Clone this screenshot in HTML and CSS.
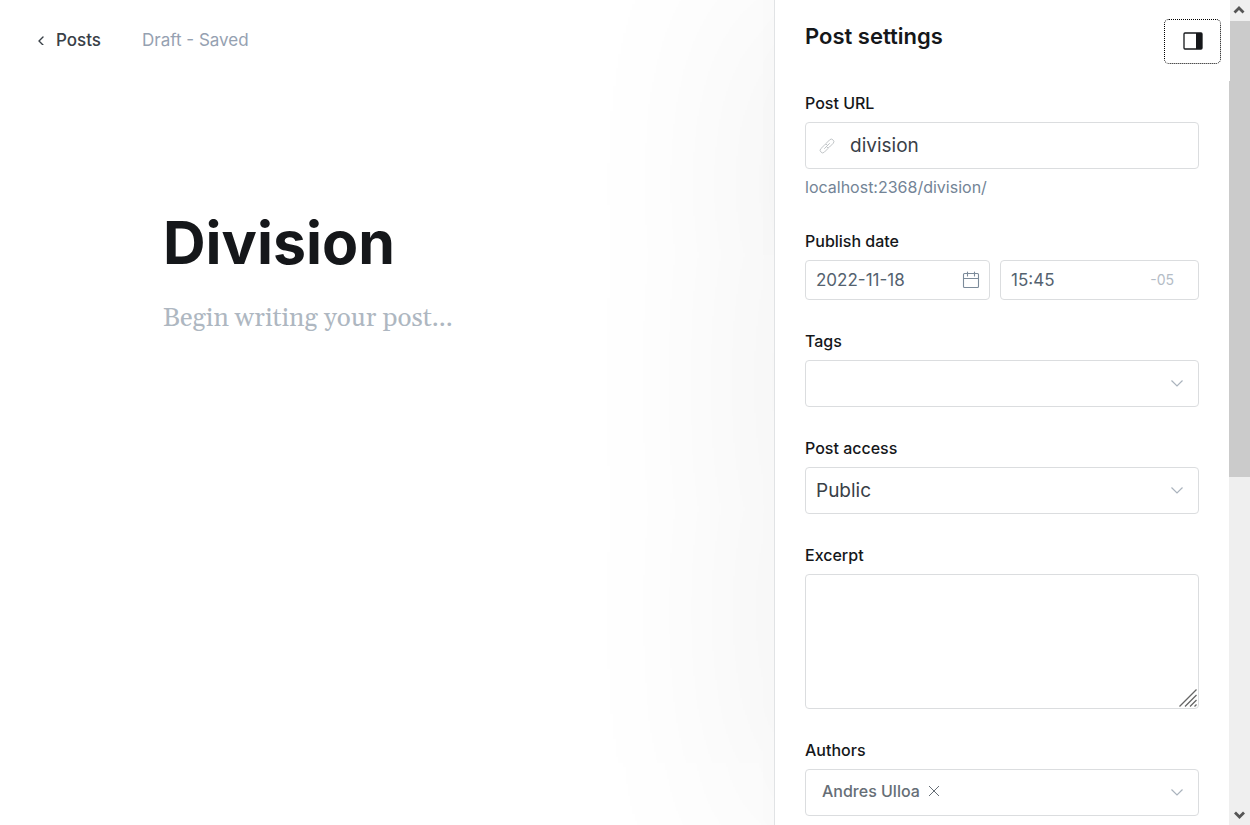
FILE: index.html
```html
<!DOCTYPE html>
<html lang="en">
<head>
<meta charset="utf-8">
<title>Division</title>
<meta name="viewport" content="width=device-width, initial-scale=1">
<link rel="stylesheet" href="styles.css">
</head>
<body>
<div class="app">
  <main class="editor">
    <header class="topbar">
      <a class="back" href="#posts">
        <svg width="8" height="10" viewBox="0 0 8 10" fill="none" stroke="currentColor" stroke-width="1.4" stroke-linecap="round" stroke-linejoin="round" aria-hidden="true"><path d="M6 2 2 6l4 4"/></svg>
        <span>Posts</span>
      </a>
      <span class="status">Draft - Saved</span>
    </header>
    <article class="canvas">
      <h1 class="post-title">Division</h1>
      <p class="post-placeholder">Begin writing your post...</p>
    </article>
  </main>

  <aside class="settings">
    <div class="panel">
      <header class="panel-head">
        <h2 class="panel-title">Post settings</h2>
        <button class="toggle" type="button" aria-label="Toggle settings">
          <svg width="20" height="19" viewBox="0 0 20 19" aria-hidden="true"><rect x="1" y="1" width="18" height="16" rx="1" fill="none" stroke="#15171a" stroke-width="1.3"/><path d="M13 1h6v16h-6z" fill="#15171a"/></svg>
        </button>
      </header>

      <form class="form">
        <div class="group">
          <label class="label" for="url">Post URL</label>
          <div class="field">
            <svg class="lead" width="16" height="16" viewBox="0 0 16 16" fill="none" stroke="#b9bdc1" stroke-width="0.9" stroke-linecap="round" stroke-linejoin="round" aria-hidden="true"><path d="m5.500 10.500 5-5"/><path d="M7 5.500 10.700 1.800a2.300 2.300 0 0 1 3.200 0l.3.3a2.300 2.300 0 0 1 0 3.200L10.500 9a2.300 2.300 0 0 1-2.200.6"/><path d="M9 10.500 5.300 14.200a2.300 2.300 0 0 1-3.200 0l-.3-.3a2.300 2.300 0 0 1 0-3.200L5.500 7a2.300 2.300 0 0 1 2.200-.6"/></svg>
            <input class="input input-lead" id="url" type="text" value="division">
          </div>
          <p class="help">localhost:2368/division/</p>
        </div>

        <div class="group">
          <label class="label" for="date">Publish date</label>
          <div class="datetime">
            <div class="field field-small">
              <input class="input" id="date" type="text" value="2022-11-18">
              <svg class="calendar" width="18" height="18" viewBox="0 0 18 18" fill="none" stroke="#7c8b9a" stroke-width="1.1" stroke-linecap="round" stroke-linejoin="round" aria-hidden="true"><rect x="1.500" y="2.500" width="15" height="14" rx="1"/><path d="M1.500 7.500h15M5.500 1v4M12.500 1v4"/></svg>
            </div>
            <div class="field field-small">
              <input class="input" id="time" type="text" value="15:45" aria-label="Publish time">
              <span class="zone">-05</span>
            </div>
          </div>
        </div>

        <div class="group">
          <label class="label" for="tags">Tags</label>
          <div class="field">
            <input class="input" id="tags" type="text" role="combobox" aria-expanded="false">
            <svg class="chevron" width="14" height="8" viewBox="0 0 14 8" aria-hidden="true"><path d="m1.500.500 5.500 5.500 5.500-5.500"/></svg>
          </div>
        </div>

        <div class="group">
          <label class="label" for="access">Post access</label>
          <div class="field">
            <select class="input input-select" id="access"><option>Public</option><option>Members only</option></select>
            <svg class="chevron" width="14" height="8" viewBox="0 0 14 8" aria-hidden="true"><path d="m1.500.500 5.500 5.500 5.500-5.500"/></svg>
          </div>
        </div>

        <div class="group">
          <label class="label" for="excerpt">Excerpt</label>
          <div class="field field-area">
            <textarea class="input area" id="excerpt"></textarea>
            <svg class="grip" width="18" height="18" viewBox="0 0 18 18" fill="none" stroke="#666" stroke-width="1.3" aria-hidden="true"><path d="M.5 17.500l17-17M6 17.500 17.500 6M11 17.500l6.500-6.500M15.500 17.500l2-2"/></svg>
          </div>
        </div>

        <div class="group">
          <label class="label" for="authors">Authors</label>
          <div class="field">
            <span class="token">Andres Ulloa
              <button class="remove" type="button" aria-label="Remove Andres Ulloa"><svg width="12" height="12" viewBox="0 0 12 12" stroke="#666e76" stroke-width="1" aria-hidden="true"><path d="m1 1 10 10M11 1 1 11"/></svg></button>
            </span>
            <input class="input" id="authors" type="text" role="combobox" aria-expanded="false">
            <svg class="chevron" width="14" height="8" viewBox="0 0 14 8" aria-hidden="true"><path d="m1.500.500 5.500 5.500 5.500-5.500"/></svg>
          </div>
        </div>
      </form>
    </div>

    <div class="scrollbar" aria-hidden="true">
      <svg class="arrow" width="21" height="21" viewBox="0 0 21 21"><path d="m5.500 12.500 4.500-4.500 4.500 4.500"/></svg>
      <div class="track"><div class="thumb"></div></div>
      <svg class="arrow" width="21" height="21" viewBox="0 0 21 21"><path d="m6 8.500 4.500 4.500 4.500-4.500"/></svg>
    </div>
  </aside>
</div>
</body>
</html>
```

FILE: styles.css
```css
*, *::before, *::after { box-sizing: border-box; }

body {
  margin: 0;
  background: #fff;
  color: #15171a;
  font-family: Inter, "Open Sans", sans-serif;
  font-size: 16px;
  line-height: 20px;
}

h1, h2, p { margin: 0; }

button, input, select, textarea { font: inherit; color: inherit; }

.app {
  display: flex;
  height: 100vh;
  overflow: hidden;
}

.editor { flex: 1; min-width: 0; }

.topbar {
  display: flex;
  align-items: center;
  gap: 41px;
  height: 80px;
  padding: 0 37px;
  font-size: 17px;
}

.back {
  display: flex;
  align-items: center;
  gap: 11px;
  color: #394047;
  font-weight: 500;
  text-decoration: none;
}

.status { color: #95a1b1; }

.canvas { padding: 123px 24px 0 163px; }

.post-title {
  font-size: 59px;
  font-weight: 700;
  line-height: 80px;
}

.post-placeholder {
  margin-top: 18px;
  color: #aeb7c1;
  font-family: Georgia, Gelasio, "Liberation Serif", serif;
  font-size: 26px;
  line-height: 36px;
}

.settings {
  display: flex;
  flex: 0 0 476px;
  border-left: 1px solid #e1e3e5;
  background: #fff;
  box-shadow: 0 0 200px 16px rgba(0, 0, 0, 0.065);
}

.panel { flex: 1; min-width: 0; }

.panel-head {
  position: relative;
  z-index: 1;
  display: flex;
  align-items: flex-start;
  justify-content: space-between;
  height: 81px;
  margin-right: -1px;
  padding: 19px 9px 0 30px;
  background: #fff;
}

.panel-title {
  padding-top: 3px;
  font-size: 22px;
  font-weight: 600;
  line-height: 28px;
}

.toggle {
  display: flex;
  align-items: center;
  justify-content: center;
  width: 57px;
  height: 45px;
  padding: 0;
  border: 1px dotted #000;
  border-radius: 5px;
  background: #fff;
}

.form {
  display: flex;
  flex-direction: column;
  gap: 31px;
  padding: 12px 30px 30px;
}

.label {
  display: block;
  margin-bottom: 9px;
  font-weight: 500;
}

.field {
  position: relative;
  display: flex;
  align-items: center;
  height: 47px;
  border: 1px solid #dbdddf;
  border-radius: 4px;
  background: #fff;
  color: #394047;
  font-size: 19px;
}

.input {
  flex: 1;
  width: 100%;
  min-width: 0;
  height: 100%;
  padding: 0 10px;
  border: 0;
  outline: 0;
  background: transparent;
}

.lead { flex: none; margin-left: 13px; }

.input-lead { padding-left: 15px; }

.input-select { appearance: none; }

.help {
  margin-top: 5px;
  color: #738496;
  line-height: 26px;
}

.datetime {
  display: grid;
  grid-template-columns: 185fr 199fr;
  gap: 10px;
}

.field-small {
  height: 40px;
  color: #54626f;
  font-size: 17px;
}

.calendar { flex: none; margin-right: 9px; }

.zone {
  padding-right: 24px;
  color: #b4bcc6;
  font-size: 14px;
}

.chevron {
  position: absolute;
  right: 14px;
  fill: none;
  stroke: #aab3bd;
  stroke-width: 1.2;
  pointer-events: none;
}

.field-area { height: 135px; }

.area {
  padding: 10px;
  resize: none;
}

.grip {
  position: absolute;
  right: 1px;
  bottom: 1px;
  pointer-events: none;
}

.token {
  display: flex;
  align-items: center;
  gap: 8px;
  padding: 0 0 3px 16px;
  color: #666e76;
  font-size: 16px;
  font-weight: 500;
}

.remove {
  display: flex;
  padding: 0;
  border: 0;
  background: none;
}

.scrollbar {
  display: flex;
  flex: 0 0 21px;
  flex-direction: column;
  background: #efefef;
}

.arrow {
  flex: none;
  fill: none;
  stroke: #555;
  stroke-width: 2.8;
}

.track { flex: 1; }

.thumb {
  height: 58.2%;
  background: #cbcbcb;
}
```
